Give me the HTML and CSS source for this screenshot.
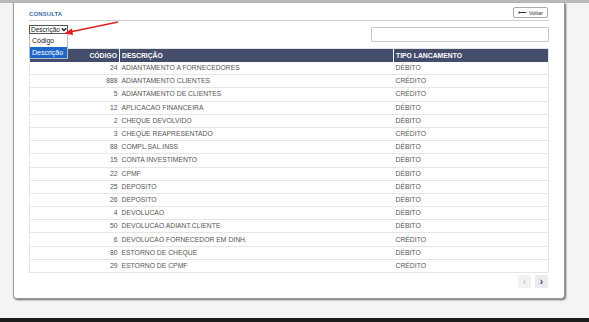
FILE: index.html
```html
<!DOCTYPE html>
<html lang="pt-BR">
<head>
  <meta charset="UTF-8">
  <meta name="viewport" content="width=device-width, initial-scale=1.0">
  <title>Consulta</title>
  <link rel="stylesheet" href="styles.css">
</head>
<body>
  <div class="topbar"></div>
  <div class="page">
    <div class="panel">
      <div class="panel-head">
        <span class="title">CONSULTA</span>
        <button class="btn-back">&#10229; Voltar</button>
      </div>

      <div class="toolbar">
        <div class="select-wrap">
          <div class="select">Descrição
            <svg class="chev" width="6" height="5" viewBox="0 0 6 5"><path d="M0.8 1.2 L3 3.6 L5.2 1.2" fill="none" stroke="#111" stroke-width="1.3"/></svg>
          </div>
          <ul class="options">
            <li>Código</li>
            <li class="active">Descrição</li>
          </ul>
        </div>
        <input class="search" type="text">
      </div>

      <table class="grid">
        <thead>
          <tr>
            <th class="code">CÓDIGO</th>
            <th>DESCRIÇÃO</th>
            <th>TIPO LANCAMENTO</th>
          </tr>
        </thead>
        <tbody>
          <tr><td class="code">24</td><td>ADIANTAMENTO A FORNECEDORES</td><td>DÉBITO</td></tr>
          <tr><td class="code">888</td><td>ADIANTAMENTO CLIENTES</td><td>CRÉDITO</td></tr>
          <tr><td class="code">5</td><td>ADIANTAMENTO DE CLIENTES</td><td>CRÉDITO</td></tr>
          <tr><td class="code">12</td><td>APLICACAO FINANCEIRA</td><td>DÉBITO</td></tr>
          <tr><td class="code">2</td><td>CHEQUE DEVOLVIDO</td><td>DÉBITO</td></tr>
          <tr><td class="code">3</td><td>CHEQUE REAPRESENTADO</td><td>CRÉDITO</td></tr>
          <tr><td class="code">88</td><td>COMPL.SAL.INSS</td><td>DÉBITO</td></tr>
          <tr><td class="code">15</td><td>CONTA INVESTIMENTO</td><td>DÉBITO</td></tr>
          <tr><td class="code">22</td><td>CPMF</td><td>DÉBITO</td></tr>
          <tr><td class="code">25</td><td>DEPOSITO</td><td>DÉBITO</td></tr>
          <tr><td class="code">26</td><td>DEPOSITO</td><td>DÉBITO</td></tr>
          <tr><td class="code">4</td><td>DEVOLUCAO</td><td>DÉBITO</td></tr>
          <tr><td class="code">50</td><td>DEVOLUCAO ADIANT.CLIENTE</td><td>DÉBITO</td></tr>
          <tr><td class="code">6</td><td>DEVOLUCAO FORNECEDOR EM DINH.</td><td>CRÉDITO</td></tr>
          <tr><td class="code">80</td><td>ESTORNO DE CHEQUE</td><td>DÉBITO</td></tr>
          <tr><td class="code">29</td><td>ESTORNO DE CPMF</td><td>CRÉDITO</td></tr>
        </tbody>
      </table>

      <div class="pager">
        <button class="page-btn disabled">&#8249;</button>
        <button class="page-btn">&#8250;</button>
      </div>
    </div>

    <!-- red annotation arrow pointing at the select -->
    <svg class="arrow" width="60" height="20" viewBox="0 0 60 20">
      <line x1="56" y1="2" x2="8" y2="12" stroke="#e02020" stroke-width="1.4"/>
      <polygon points="2,13.5 10,8.5 11,15" fill="#e02020"/>
    </svg>
  </div>
  <div class="bottombar"></div>
</body>
</html>
```

FILE: styles.css
```css
body {
  font-family: "Liberation Sans", Arial, sans-serif;
  background-color: #f4f4f4;
  margin: 0;
  padding: 0;
  height: 322px;
  overflow: hidden;
}
.topbar {
  height: 3px;
  background-color: #b9b9b9;
}
.page {
  position: relative;
  padding-left: 13px;
}
.panel {
  width: 552px;
  height: 296px;
  box-sizing: border-box;
  background-color: #fff;
  border: 1px solid #9a9a9a;
  border-top: none;
  border-radius: 0 0 4px 4px;
  box-shadow: 1px 1px 2px #666;
  padding: 4px 15px 0 15px;
}
.panel-head {
  display: flex;
  justify-content: space-between;
  align-items: center;
  height: 11px;
  padding-bottom: 2px;
  border-bottom: 1px solid #ccc;
}
.title {
  color: #3a6ea8;
  font-size: 6px;
  font-weight: bold;
  letter-spacing: 0.1px;
  padding-top: 3px;
}
.btn-back {
  font-family: inherit;
  font-size: 5.5px;
  color: #333;
  background-color: #fff;
  border: 1px solid #aaa;
  border-radius: 2px;
  height: 11px;
  padding: 0 4px;
  margin-right: 1px;
}
.toolbar {
  display: flex;
  justify-content: space-between;
  align-items: flex-start;
  margin-top: 4px;
  height: 17px;
}
.select-wrap {
  position: relative;
}
.select {
  display: flex;
  align-items: center;
  gap: 1px;
  width: 39px;
  height: 9px;
  box-sizing: border-box;
  border: 1px solid #555;
  font-size: 6.5px;
  line-height: 7px;
  color: #222;
  padding-left: 1px;
  white-space: nowrap;
}
.options {
  position: absolute;
  top: 9px;
  left: 0;
  width: 39px;
  margin: 0;
  padding: 1px 0 0 0;
  list-style: none;
  background-color: #fff;
  border: 1px solid #bbb;
  border-top: none;
  box-sizing: border-box;
  z-index: 2;
}
.options li {
  font-size: 7px;
  height: 11.5px;
  line-height: 11.5px;
  padding-left: 2px;
  color: #222;
}
.options li.active {
  background-color: #1f66c9;
  color: #fff;
}
.search {
  width: 178px;
  height: 15px;
  box-sizing: border-box;
  margin-top: 2px;
  border: 1px solid #c8c8c8;
  border-radius: 1px;
  background-color: #fff;
}
.grid {
  width: 520px;
  margin-top: 6px;
  border-collapse: collapse;
  font-size: 6.8px;
  color: #555;
  table-layout: fixed;
  border: 1px solid #e4e4e4;
}
.grid th {
  background-color: #444d6c;
  color: #fff;
  text-align: left;
  height: 13px;
  padding: 0 2px;
  font-weight: bold;
  border-left: 1px solid #fff;
}
.grid th:first-child {
  border-left: none;
}
.grid td {
  height: 12.2px;
  line-height: 8px;
  padding: 0 2px;
  border-bottom: 1px solid #e6e6e6;
  white-space: nowrap;
}
.grid th:nth-child(1) {
  width: 85px;
}
.grid th:nth-child(2) {
  width: 269px;
}
.grid .code {
  text-align: right;
}
.pager {
  display: flex;
  justify-content: flex-end;
  gap: 4px;
  margin-top: 2px;
  margin-right: 1px;
}
.page-btn {
  width: 13px;
  height: 13px;
  padding: 0;
  border: none;
  background-color: #e8ebef;
  color: #445;
  font-size: 10px;
  font-weight: bold;
  line-height: 11px;
}
.page-btn.disabled {
  background-color: #f2f2f2;
  color: #ccc;
}
.arrow {
  position: absolute;
  top: 17px;
  left: 62px;
}
.bottombar {
  position: absolute;
  left: 0;
  right: 0;
  top: 318px;
  height: 4px;
  background-color: #1c1c1c;
}
```
